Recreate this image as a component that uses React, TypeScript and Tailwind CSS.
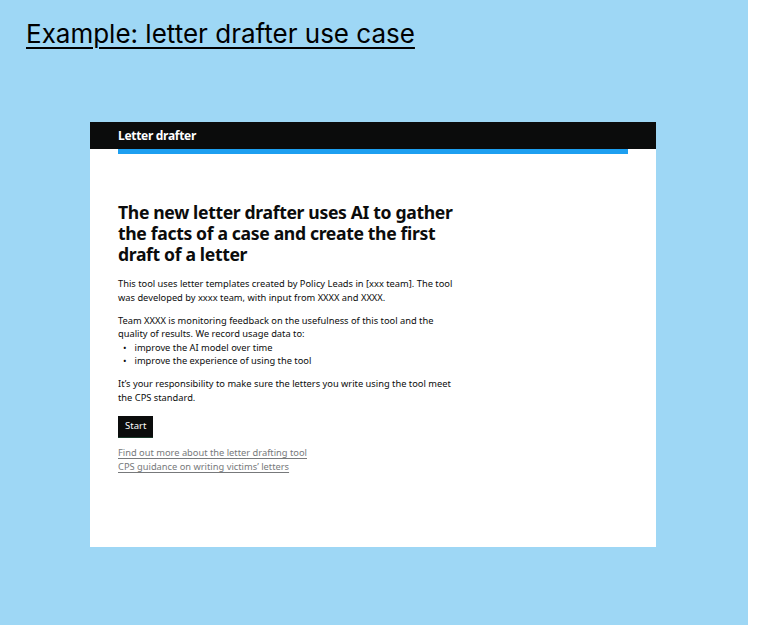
export default function App() {
  return (
    <div className="flex min-h-[625px] bg-white">
      <div className="w-[748px] h-[625px] bg-[#9ed7f5] pt-[17px] pl-[26px]">
        <h1
          className="text-[26px] leading-[34px] text-black underline decoration-[1.5px] underline-offset-[4px]"
          style={{ fontFamily: 'Inter, "Noto Sans", sans-serif' }}
        >
          Example: letter drafter use case
        </h1>

        <div
          className="mt-[71px] ml-[64px] w-[566px] h-[425px] bg-white"
          style={{ fontFamily: '"Noto Sans", Lato, sans-serif' }}
        >
          {/* Header */}
          <div className="h-[27px] bg-[#0b0c0c] px-[28px] flex items-center">
            <span className="text-white text-[12px] font-bold tracking-tight">Letter drafter</span>
          </div>
          <div className="mx-[28px] h-[5px] bg-[#1d9ff0]" />

          {/* Body */}
          <div className="px-[28px] pt-[48px] w-[342px] box-content">
            <h2 className="text-[17.6px] leading-[21px] font-bold text-[#0b0c0c] tracking-[-0.35px]">
              The new letter drafter uses AI to gather the facts of a case and create the first draft of a letter
            </h2>

            <div className="mt-[12px] text-[9.3px] leading-[13.5px] text-[#0b0c0c] space-y-[9.5px]">
              <p>
                This tool uses letter templates created by Policy Leads in [xxx team]. The tool was developed by xxxx
                team, with input from XXXX and XXXX.
              </p>
              <div>
                <p>
                  Team XXXX is monitoring feedback on the usefulness of this tool and the quality of results. We record
                  usage data to:
                </p>
                <ul className="pl-[5px]">
                  <li className="flex gap-[8px]">
                    <span>•</span>
                    <span>improve the AI model over time</span>
                  </li>
                  <li className="flex gap-[8px]">
                    <span>•</span>
                    <span>improve the experience of using the tool</span>
                  </li>
                </ul>
              </div>
              <p>It’s your responsibility to make sure the letters you write using the tool meet the CPS standard.</p>
            </div>

            <button className="mt-[12px] h-[21px] px-[7px] bg-[#0b0c0c] text-white text-[9.5px] shadow-[0_1px_0_#1a3a2a]">
              Start
            </button>

            <div className="mt-[9px] flex flex-col text-[9.3px] leading-[14px] text-[#77797b]">
              <a href="#" className="underline underline-offset-2 w-fit">
                Find out more about the letter drafting tool
              </a>
              <a href="#" className="underline underline-offset-2 w-fit">
                CPS guidance on writing victims’ letters
              </a>
            </div>
          </div>
        </div>
      </div>
    </div>
  )
}
